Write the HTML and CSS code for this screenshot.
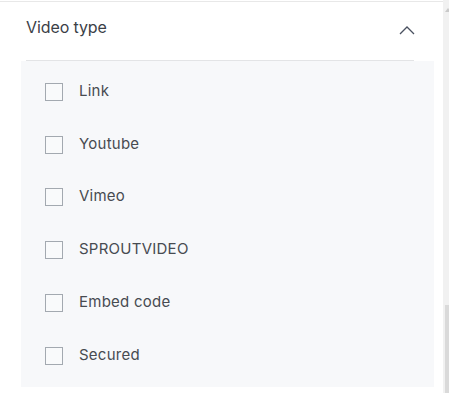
FILE: index.html
```html
<!DOCTYPE html>
<html>
<head>
<meta charset="utf-8">
<link rel="stylesheet" href="styles.css">
</head>
<body>
<div class="page">
  <div class="main">
    <div class="header">
      <span class="title">Video type</span>
      <svg class="chevron" width="16" height="9" viewBox="0 0 16 9"><path d="M1 8 L8 1 L15 8" fill="none" stroke="#4a5160" stroke-width="1.3"/></svg>
    </div>
    <div class="divider"></div>
    <div class="panel">
      <label class="row"><span class="box"></span><span class="label">Link</span></label>
      <label class="row"><span class="box"></span><span class="label">Youtube</span></label>
      <label class="row"><span class="box"></span><span class="label">Vimeo</span></label>
      <label class="row"><span class="box"></span><span class="label">SPROUTVIDEO</span></label>
      <label class="row"><span class="box"></span><span class="label">Embed code</span></label>
      <label class="row"><span class="box"></span><span class="label">Secured</span></label>
    </div>
  </div>
  <div class="scrollbar">
    <div class="arrow"></div>
    <div class="track"></div>
    <div class="thumb"></div>
  </div>
</div>
</body>
</html>
```
FILE: styles.css
```css
html, body {
  margin: 0;
  padding: 0;
  background: #ffffff;
}
body {
  font-family: Inter, "Liberation Sans", sans-serif;
}
.page {
  display: flex;
  height: 393px;
  overflow: hidden;
}
.main {
  flex: 1;
  margin-top: 1px;
  border-top: 1px solid #e8e8e8;
}
.header {
  display: flex;
  align-items: center;
  justify-content: space-between;
  height: 50px;
  padding: 0 29px 8px 26px;
}
.title {
  font-size: 16px;
  color: #3b4047;
  letter-spacing: -0.1px;
}
.chevron {
  display: block;
  margin-top: 6px;
  margin-right: -1px;
}
.divider {
  height: 1px;
  background: #e3e4e6;
  margin: 0 29px 0 26px;
}
.panel {
  margin-left: 21px;
  width: 413px;
  height: 326px;
  box-sizing: border-box;
  padding-top: 3px;
  background: #f7f8fa;
}
.row {
  display: flex;
  align-items: center;
  height: 52.8px;
  padding-left: 24px;
}
.box {
  width: 18px;
  height: 18px;
  box-sizing: border-box;
  border: 1.5px solid #a3a9b0;
  background: #f9fafb;
  margin-top: 3px;
}
.label {
  margin-left: 16px;
  font-size: 15px;
  color: #474b51;
  letter-spacing: 0.25px;
}
.scrollbar {
  width: 6px;
  background: #f1f1f1;
  display: flex;
  flex-direction: column;
}
.arrow {
  width: 0;
  height: 0;
  margin: 8px 0 0 2px;
  border-left: 3px solid transparent;
  border-right: 3px solid transparent;
  border-bottom: 4px solid #c9c9c9;
}
.track {
  flex: 1;
}
.thumb {
  height: 88px;
  margin-left: 2px;
  background: #dadada;
}
```
